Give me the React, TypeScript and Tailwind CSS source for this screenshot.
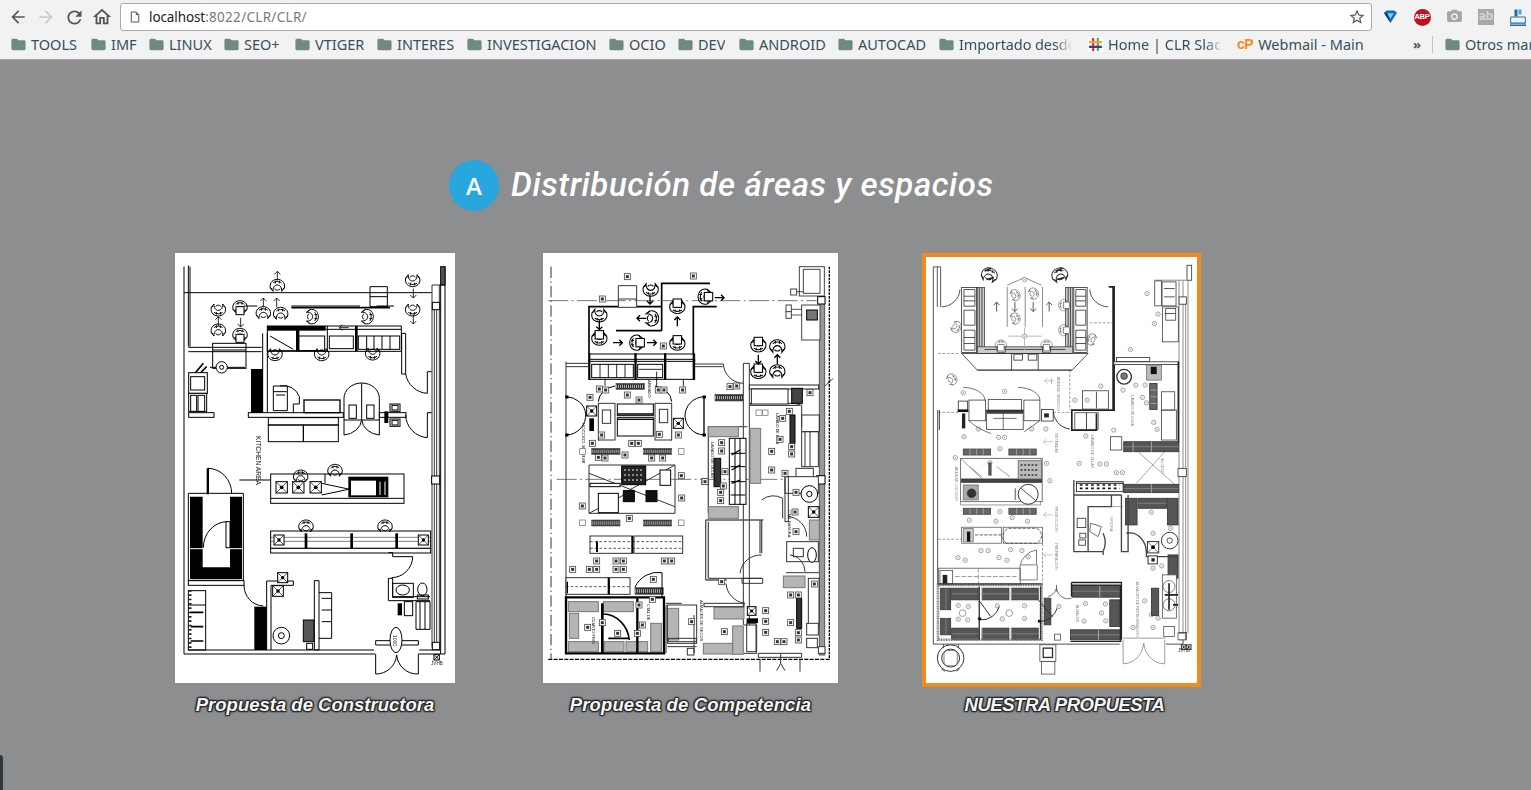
import React from "react";

type N = number[];
const Rs = ({ d, fill = "none", stroke, sw }: { d: N[]; fill?: string; stroke?: string; sw?: number }) => (
  <g fill={fill} stroke={stroke} strokeWidth={sw}>
    {d.map((r, i) => (
      <rect key={i} x={r[0]} y={r[1]} width={r[2]} height={r[3]} />
    ))}
  </g>
);
const Chair = ({ x, y, r = 0, s = 1, seat = false }: { x: number; y: number; r?: number; s?: number; seat?: boolean }) => (
  <g transform={`translate(${x} ${y}) rotate(${r}) scale(${s})`} fill="none">
    <path d="M-21 6C-25 -12 -11 -20 0 -20S25 -12 21 6L13 16C14 6 9 -3 0 -3S-14 6 -13 16Z" />
    <path d="M-13 -9C-7 -15 7 -15 13 -9M-15 10L-21 6M15 10L21 6M-6 -16V-8M6 -16V-8" />
    {seat ? <rect x="-12" y="-2" width="24" height="24" fill="#fff" /> : <path d="M-8 8C-6 14 6 14 8 8" />}
  </g>
);
const Chairs = ({ d, s = 1 }: { d: N[]; s?: number }) => (
  <>
    {d.map((c, i) => (
      <Chair key={i} x={c[0]} y={c[1]} r={c[2] || 0} s={s} seat={!!c[3]} />
    ))}
  </>
);
const Arrows = ({ d, w = 2.5 }: { d: N[]; w?: number }) => (
  <g fill="none" strokeWidth={w}>
    {d.map((a, i) => (
      <path key={i} transform={`translate(${a[0]} ${a[1]}) rotate(${a[2]})`} d="M0 14V-14M-9 -5L0 -14L9 -5" />
    ))}
  </g>
);
const Xs = ({ d }: { d: N[] }) => (
  <g fill="#fff" strokeWidth="3">
    {d.map((b, i) => (
      <g key={i}>
        <rect x={b[0]} y={b[1]} width={b[2]} height={b[2]} />
        <path d={`M${b[0]} ${b[1]}l${b[2]} ${b[2]}M${b[0] + b[2]} ${b[1]}l${-b[2]} ${b[2]}`} fill="none" strokeWidth="2" />
        <circle cx={b[0] + b[2] / 2} cy={b[1] + b[2] / 2} r={b[2] / 6} fill="#000" stroke="none" />
      </g>
    ))}
  </g>
);
const Tags = ({ d }: { d: N[] }) => (
  <g>
    {d.map((t, i) => (
      <g key={i}>
        <rect x={t[0] - 9} y={t[1] - 9} width="18" height="18" fill="#fff" stroke="#444" strokeWidth="2.4" />
        <rect x={t[0] - 4.5} y={t[1] - 4.5} width="9" height="9" fill="#333" stroke="none" />
      </g>
    ))}
  </g>
);
const Rings = ({ d }: { d: N[] }) => (
  <g fill="#fff" stroke="#777" strokeWidth="2">
    {d.map((t, i) => (
      <g key={i}>
        <circle cx={t[0]} cy={t[1]} r="6.5" />
        <circle cx={t[0]} cy={t[1]} r="2" fill="#999" stroke="none" />
      </g>
    ))}
  </g>
);
const Label = ({ x, y, t, fs = 13, r = 90, c = "#555" }: { x: number; y: number; t: string; fs?: number; r?: number; c?: string }) => (
  <text
    transform={`translate(${x} ${y}) rotate(${r})`}
    fontSize={fs}
    fill={c}
    stroke="none"
    fontFamily="'Liberation Sans', sans-serif"
  >
    {t}
  </text>
);

const PlanOne = () => (
  <svg viewBox="15 9 840 1290" className="block w-full h-full blur-[0.25px]" fill="none" stroke="#000" strokeWidth="3">
    <path d="M42 50V1212H615M745 1212H825V50M60 50V290M55 46V290M42 128H785M55 1200H612M748 1200H810M812 105V1212" />
    <rect x="812" y="50" width="13" height="55" fill="#555" />
    <path d="M786 105V1192M808 105V1192M793 180V1178M800 180V1178M786 105H825" strokeWidth="2.4" />
    <Rs d={[[787, 157, 22, 22], [785, 678, 24, 24], [787, 1177, 22, 22]]} fill="#fff" />
    <path d="M364 173H660" strokeWidth="5" />
    <path d="M600 110H652V170H600ZM600 140H652M620 168H672M364 168H570" />
    <rect x="292" y="228" width="402" height="76" fill="#fff" />
    <Rs d={[[292, 228, 175, 14], [378, 228, 10, 76], [555, 228, 8, 76]]} fill="#000" stroke="none" />
    <path d="M292 238H694M472 228V300M694 250H707V372H695V250M300 258L370 298M296 302H466" />
    <Rs d={[[386, 258, 78, 44], [478, 258, 72, 38], [565, 258, 124, 40]]} />
    <path d="M590 258V298M612 258V298M636 258V298M660 258V298" />
    <Chairs d={[[322, 108], [728, 90, 180], [728, 178, 180], [145, 178, 180], [145, 242], [210, 172, 0, 1], [210, 255, 0, 1], [280, 190], [332, 192], [425, 200, 90], [590, 200, 90], [315, 312, 180], [455, 312, 180], [608, 310, 180], [392, 680], [495, 663], [408, 830], [645, 830]]} />
    <Arrows d={[[322, 78, 0], [730, 130, 180], [730, 208, 180], [145, 214, 0], [212, 217, 180], [280, 158, 0], [320, 158, 0], [522, 233, 270]]} />
    <path d="M222 168H262" />
    <path d="M55 292H275M55 305H275M278 250V488M292 250V488" />
    <rect x="128" y="280" width="100" height="75" />
    <path d="M128 300H228M120 352H225" />
    <circle cx="155" cy="352" r="17" fill="#fff" />
    <circle cx="155" cy="352" r="6" />
    <path d="M75 370L100 340M85 375L110 350" strokeWidth="5" />
    <Rs d={[[56, 368, 56, 62], [56, 430, 54, 55], [62, 380, 42, 40], [62, 436, 18, 48], [84, 436, 20, 48], [56, 488, 76, 14], [235, 488, 285, 14]]} fill="#fff" />
    <rect x="243" y="357" width="36" height="132" fill="#000" stroke="none" />
    <path d="M310 408H352V482H310ZM310 425H350M318 435H345M330 408A50 50 0 0 1 388 440V462H370V490" />
    <rect x="402" y="450" width="108" height="38" fill="#fff" strokeWidth="4" />
    <path d="M522 445A53 46 0 0 1 628 445M575 400V510M522 445V510H628V445M522 555A60 50 0 0 0 575 510M628 555A60 50 0 0 1 575 510M522 510V555M628 510V555" />
    <Rs d={[[537, 465, 22, 40], [590, 465, 22, 40]]} fill="#fff" />
    <Rs d={[[660, 462, 30, 22], [660, 507, 30, 22], [666, 466, 18, 14], [666, 511, 18, 14], [628, 488, 80, 14]]} fill="#fff" />
    <rect x="643" y="484" width="12" height="35" fill="#000" stroke="none" />
    <path d="M707 372A70 70 0 0 0 772 430M772 365H785M772 365V430M707 495A70 70 0 0 0 772 563M772 488H785M772 488V563" />
    <Rs d={[[295, 503, 210, 22], [295, 525, 105, 50], [400, 525, 105, 50]]} />
    <Label x={257} y={558} t="KITCHEN  AREA" fs={20} c="#222" />
    <path d="M208 690H302M113 655A72 75 0 0 1 185 730" />
    <rect x="110" y="655" width="7" height="78" fill="#000" stroke="none" />
    <rect x="302" y="672" width="400" height="88" />
    <path d="M302 745H702M455 700L620 735M455 735L620 700M465 672V700" />
    <Xs d={[[318, 695, 34], [368, 695, 34], [420, 695, 34]]} />
    <rect x="535" y="680" width="120" height="62" fill="#000" stroke="none" />
    <rect x="543" y="692" width="75" height="44" fill="#fff" stroke="none" />
    <path d="M630 695V735M645 695V735M664 685L695 740" stroke="#fff" />
    <path d="M55 730H220V992H55Z" />
    <path fill="#000" stroke="none" fillRule="evenodd" d="M60 740H216V988H60ZM98 740V952H180V740Z" />
    <path d="M100 893A72 78 0 0 1 172 815M60 896H100M180 896H216" stroke="#fff" />
    <path d="M100 893A72 78 0 0 1 172 815" />
    <rect x="168" y="815" width="12" height="78" fill="#fff" />
    <rect x="55" y="992" width="167" height="14" fill="#fff" />
    <path d="M222 1006A60 62 0 0 0 280 1068" />
    <rect x="253" y="1070" width="37" height="130" fill="#000" stroke="none" />
    <rect x="55" y="1022" width="52" height="178" />
    <path d="M55 1065H107" />
    <path d="M60 1020V1198" strokeWidth="9" stroke="#222" strokeDasharray="5 8" />
    <path d="M62 1087H100M62 1130H100M62 1173H100" strokeWidth="5" />
    <rect x="302" y="843" width="480" height="52" />
    <rect x="302" y="895" width="480" height="14" fill="#fff" />
    <Rs d={[[404, 850, 8, 45], [541, 850, 8, 45], [676, 850, 8, 45]]} fill="#000" stroke="none" />
    <path d="M302 862H782M302 874H782" strokeWidth="1.5" />
    <Xs d={[[312, 855, 30], [745, 855, 30]]} />
    <path d="M655 908H668V920H728M728 920A64 64 0 0 1 665 983" />
    <path d="M655 985H668V1040H780M655 985V1052H780" />
    <rect x="668" y="1000" width="62" height="42" />
    <ellipse cx="698" cy="1020" rx="20" ry="15" />
    <ellipse cx="757" cy="1018" rx="14" ry="19" />
    <rect x="742" y="1035" width="33" height="12" />
    <rect x="703" y="1055" width="25" height="42" />
    <rect x="683" y="1060" width="13" height="36" fill="#000" stroke="none" />
    <path d="M738 1055H780V1138H738ZM750 1055V1138M765 1055V1138" />
    <path d="M290 993H370V1006H303V1200M290 993V1200M433 992H447V1200H433V992" />
    <Xs d={[[308, 1007, 32], [323, 968, 30]]} />
    <circle cx="334" cy="1157" r="25" />
    <circle cx="334" cy="1157" r="9" />
    <path d="M447 1028H485V1165H447M455 1045H485M455 1080H485M455 1115H485" />
    <rect x="400" y="1110" width="32" height="65" fill="#555" />
    <rect x="410" y="1180" width="18" height="18" />
    <path d="M617 1172H745V1185H617ZM617 1212V1272A62 62 0 0 0 680 1215M745 1212V1272A62 62 0 0 1 680 1215" />
    <ellipse cx="678" cy="1170" rx="18" ry="38" fill="#fff" />
    <Label x={670} y={1155} t="1000" fs={15} c="#111" />
    <Xs d={[[792, 1214, 16]]} />
    <Label x={783} y={1245} t="JVHB" fs={14} r={0} c="#222" />
  </svg>
);

const grills = [[228, 400, 85, 18], [525, 433, 85, 20], [155, 595, 85, 18], [310, 595, 85, 18], [155, 810, 85, 18], [310, 810, 85, 18], [285, 1013, 85, 20]];
const grays = [[630, 535, 32, 165], [505, 530, 90, 30], [505, 770, 90, 35], [85, 1055, 90, 30], [190, 1055, 90, 30], [85, 1175, 90, 30], [192, 1175, 60, 30], [258, 1175, 65, 30], [88, 1090, 28, 75], [332, 1120, 32, 85], [382, 1075, 34, 95], [522, 1072, 90, 35], [490, 1180, 88, 32], [578, 1128, 32, 85], [730, 978, 65, 35], [808, 810, 30, 60]];
const PlanTwo = () => (
  <svg viewBox="9 9 885 1290" className="block w-full h-full blur-[0.35px]" fill="none" stroke="#000" strokeWidth="3">
    <path d="M33 50V1226" stroke="#333" strokeDasharray="34 10 4 10" />
    <path d="M25 152H830M50 688H830" stroke="#333" strokeDasharray="60 10 6 10" strokeWidth="2" />
    <path d="M25 1228H870" strokeDasharray="12 4" strokeWidth="4" />
    <path d="M868 50V1228" strokeDasharray="8 3" strokeWidth="4" />
    <rect x="838" y="140" width="16" height="1075" fill="#999" stroke="#555" />
    <path d="M862 400L872 388M855 408L880 385" strokeWidth="2" />
    <Rs d={[[778, 50, 75, 88], [790, 58, 50, 72], [752, 117, 18, 18], [785, 165, 55, 105], [738, 165, 16, 20], [738, 185, 16, 20]]} fill="#fff" stroke="#444" />
    <Rs d={[[800, 180, 32, 30]]} fill="#777" />
    <path d="M770 125H790M755 178H785M755 195H785" strokeWidth="2" />
    <Rs d={[[833, 140, 22, 22], [830, 677, 25, 25]]} fill="#fff" strokeWidth="4" />
    <path d="M147 312V170H235M290 170H365V100H510M228 242H365M460 312V170H530M365 100V242" strokeWidth="5" />
    <path d="M235 107H290V172H235ZM235 147H290" stroke="#333" />
    <Chairs s={1.05} d={[[332, 118, 180], [178, 195, 180], [178, 265, 180, 1], [335, 205, 90], [412, 170, 180, 1], [412, 280, 180, 1], [290, 278, 270, 1], [495, 140, 270, 1], [655, 285, 180, 1], [712, 290], [655, 365, 180, 1], [712, 365]]} />
    <Arrows w={4} d={[[330, 148, 180], [178, 225, 180], [305, 205, 270], [412, 215, 0], [233, 278, 90], [335, 278, 90], [538, 143, 90], [655, 328, 180], [712, 328, 0]]} />
    <Rs d={[[147, 312, 317, 76], [147, 328, 317, 6]]} fill="#fff" />
    <Rs d={[[145, 310, 6, 80], [283, 310, 7, 80], [372, 310, 7, 80], [458, 310, 6, 80]]} fill="#000" stroke="none" />
    <Rs d={[[155, 343, 125, 40], [293, 343, 75, 40]]} />
    <path d="M180 343V383M205 343V383M230 343V383M255 343V383M297 358H365M195 388V408M350 365V410M430 388V410" strokeWidth="2.5" />
    <path d="M78 335V1210M78 340H145M78 350H145M465 342H550M465 350H548M550 342A62 62 0 0 0 610 400M610 340H628V1125M610 340V1125" stroke="#333" />
    <Rs d={[[632, 460, 145, 6], [628, 405, 208, 12], [634, 417, 110, 45]]} fill="#fff" stroke="#222" />
    <Rs d={grills} fill="#333" stroke="#555" sw={2} />
    <g stroke="#aaa" strokeWidth="1.5" strokeDasharray="3 3">
      <path d="M228 409H313M525 443H610M155 604H240M310 604H395M155 819H240M310 819H395M285 1023H370" strokeWidth="10" />
    </g>
    <Rs d={[[750, 495, 15, 85], [522, 625, 20, 85], [770, 1045, 15, 90]]} fill="#333" />
    <Rs d={[[232, 462, 108, 35], [232, 503, 108, 55]]} fill="#fff" strokeWidth="4" />
    <path d="M232 492H340M232 508H340" strokeWidth="4" />
    <path d="M175 455A60 50 0 0 1 225 408M395 455A60 50 0 0 0 345 408M175 570L225 552M395 570L345 552" />
    <Rs d={[[175, 460, 50, 110], [345, 460, 50, 110], [187, 480, 25, 40], [358, 478, 25, 40]]} fill="#fff" stroke="#333" />
    <path d="M80 440A62 58 0 0 1 137 490A60 60 0 0 1 80 555M492 440A60 58 0 0 0 435 500A60 60 0 0 0 492 555" />
    <Rs d={[[77, 438, 7, 6], [77, 552, 7, 6], [489, 438, 7, 6], [489, 552, 7, 6]]} fill="#000" />
    <path d="M492 440V555" strokeWidth="4" />
    <Xs d={[[140, 468, 30], [400, 505, 30]]} />
    <rect x="148" y="505" width="14" height="38" fill="#000" stroke="none" />
    <path d="M147 645V790H405V645H147M147 670L405 770M147 790L280 720M405 645L250 730" stroke="#333" />
    <rect x="245" y="648" width="72" height="56" fill="#222" />
    <path d="M252 660h55M252 675h55M252 690h55" stroke="#aaa" strokeDasharray="6 6" strokeWidth="5" />
    <Rs d={[[175, 730, 60, 58], [360, 660, 32, 46], [150, 700, 90, 10]]} fill="#fff" />
    <Rs d={[[250, 722, 33, 33], [318, 722, 33, 33]]} fill="#111" />
    <path d="M505 530V790M505 530H622M497 810H670M497 810V990M505 815V985M497 990H560M505 985H665M665 810V910M660 810V910" stroke="#555" strokeWidth="4" />
    <Rs d={grays} fill="#b5b5b5" stroke="#777" />
    <Rs d={[[568, 565, 50, 198]]} fill="#fff" strokeWidth="5" />
    <path d="M572 610H616M572 650H616M572 695H616M572 735H616M585 565V763M600 565V763" strokeWidth="3" />
    <path d="M575 615L600 600M575 660L600 645M575 700L600 690" strokeWidth="4" />
    <path d="M600 970A62 62 0 0 1 665 915M606 985H668V1000H606ZM558 1000A65 65 0 0 0 615 1060M665 750A55 55 0 0 1 728 745V805M745 800A60 60 0 0 1 800 860" stroke="#333" />
    <Rs d={[[755, 415, 32, 45]]} fill="#444" />
    <path d="M770 465H785V530M785 495H838V545H785ZM785 545H835V650H785ZM795 545V650M810 545V650" stroke="#333" />
    <Rs d={[[768, 655, 52, 32], [735, 680, 100, 50]]} fill="#fff" stroke="#333" />
    <circle cx="808" cy="732" r="25" fill="#fff" />
    <circle cx="808" cy="732" r="8" />
    <Rs d={[[735, 680, 10, 135]]} stroke="#333" />
    <Xs d={[[805, 770, 32], [622, 1070, 26]]} />
    <Rs d={[[740, 875, 95, 60], [760, 895, 30, 25]]} fill="#fff" stroke="#333" />
    <ellipse cx="816" cy="915" rx="13" ry="22" fill="#fff" />
    <path d="M750 915A50 50 0 0 1 795 965M738 968H838" stroke="#333" />
    <Rs d={[[805, 985, 32, 145], [800, 1120, 35, 35], [800, 1165, 32, 28], [835, 1190, 20, 20]]} fill="#fff" stroke="#333" />
    <Rs d={[[150, 858, 128, 52], [282, 858, 146, 52], [78, 983, 128, 50], [208, 983, 62, 50]]} fill="#fff" stroke="#333" />
    <Rs d={[[168, 874, 6, 32], [203, 983, 6, 50], [274, 858, 6, 52], [80, 995, 4, 35]]} fill="#000" stroke="none" />
    <path d="M150 875H428M150 895H428M78 1010H270" strokeDasharray="8 6" strokeWidth="2" />
    <path d="M78 1042H292V1210H78ZM293 1042H372V1210H78" strokeWidth="7" />
    <path d="M187 1060V1210" strokeWidth="8" />
    <path d="M190 1092A80 88 0 0 1 268 1170M205 1165H268" strokeWidth="5" />
    <path d="M285 1012A75 75 0 0 1 366 968V1040" strokeWidth="3" />
    <Rs d={[[382, 1065, 88, 115], [385, 1165, 84, 10], [492, 1060, 120, 10], [442, 1195, 20, 20]]} stroke="#333" />
    <path d="M378 1060H425M378 1065V1210M462 1095V1210M612 1125H650V1210H612M382 1190H470" stroke="#333" />
    <Rs d={[[620, 1120, 28, 85]]} stroke="#333" />
    <rect x="620" y="1105" width="34" height="14" fill="#000" stroke="none" />
    <path d="M655 1210H785V1222H655ZM660 1228V1265M780 1228V1265M710 1262L722 1240L735 1262M722 1210V1240" stroke="#333" />
    <Label x={323} y={390} t="ARMADO" fs={12} c="#222" />
    <Label x={708} y={490} t="LAVADO DE LOZA" fs={11} c="#222" />
    <Label x={512} y={575} t="LAVADO DE OLLAS" fs={12} c="#222" />
    <Label x={135} y={640} t="AREA DE COCCION" fs={13} c="#222" r={270} />
    <Label x={480} y={1050} t="ALMACEN DE SECOS" fs={12} c="#222" />
    <Label x={155} y={1100} t="CUARTO FRIO" fs={12} c="#222" />
    <Label x={322} y={1062} t="CTAL DE" fs={12} c="#222" />
    <Label x={745} y={780} t="CTAL BASURA" fs={12} c="#222" />
    <Tags d={[[262, 80], [460, 78], [187, 147], [370, 288], [178, 417], [197, 420], [355, 420], [372, 420], [262, 435], [297, 450], [428, 420], [150, 442], [570, 410], [590, 408], [810, 428], [748, 484], [728, 505], [720, 568], [755, 590], [755, 612], [695, 604], [695, 660], [735, 670], [545, 578], [545, 603], [185, 555], [358, 553], [415, 555], [157, 580], [275, 580], [295, 580], [175, 622], [195, 624], [255, 615], [335, 624], [368, 624], [424, 677], [494, 694], [555, 665], [550, 708], [127, 768], [425, 744], [268, 805], [768, 727], [765, 786], [768, 845], [170, 933], [228, 933], [250, 933], [373, 933], [395, 933], [98, 958], [148, 958], [170, 958], [228, 958], [250, 958], [340, 988], [337, 1048], [297, 1065], [307, 1125], [187, 1118], [143, 1132], [233, 1150], [292, 1150], [553, 1145], [677, 1082], [677, 1114], [677, 1147], [823, 1002], [752, 1035], [775, 1035], [752, 1118], [775, 1148], [775, 1170], [542, 727], [542, 752], [495, 695], [545, 995], [455, 1115], [712, 1175], [732, 1175]]} />
    <Rs d={[[119, 596, 17, 17], [415, 596, 17, 17], [119, 810, 17, 17], [415, 810, 17, 17], [648, 480, 18, 16], [668, 480, 16, 16]]} fill="#fff" stroke="#666" sw={2} />
  </svg>
);

const bands = [[612, 575, 165, 30], [612, 703, 165, 25], [617, 745, 35, 80], [655, 745, 85, 30], [743, 745, 32, 80], [745, 915, 30, 70], [457, 1007, 145, 35], [570, 1050, 30, 80], [452, 1140, 150, 30], [695, 1015, 22, 82], [62, 1015, 30, 65], [62, 1105, 30, 50], [95, 1015, 80, 35], [187, 1015, 80, 35], [275, 1015, 80, 35], [95, 1135, 80, 35], [187, 1135, 80, 35], [275, 1135, 80, 35], [373, 1045, 20, 80]];
const PlanThree = () => (
  <svg viewBox="18 22 814 1276" className="block w-full h-full blur-[0.35px]" fill="none" stroke="#333" strokeWidth="2.5">
    <path d="M40 50V1183H600M738 1183H790V1150M52 50V170M62 50V170M40 50H62M53 480V1005" />
    <Rs d={[[802, 45, 14, 45]]} stroke="#333" />
    <path d="M778 92V1150M790 92V1150M805 92V1150M798 140V1150M705 90H805" stroke="#777" />
    <Rs d={[[778, 140, 22, 22], [775, 655, 25, 25], [778, 1148, 22, 22]]} fill="#fff" />
    <path d="M55 310H120M55 487H115M400 487H455M450 360V480M510 218H580M55 868H125M368 868V1005" strokeDasharray="8 5" stroke="#666" strokeWidth="2" />
    <Rs d={[[125, 112, 45, 195], [462, 112, 40, 195]]} fill="#fff" strokeWidth="3" />
    <path d="M132 118H165V168H132ZM132 138H165M132 152H165M132 180H165V225H132ZM132 240H165V300H132ZM132 262H165M132 280H165M468 118H498V168H468ZM468 138H498M468 152H498M468 180H498V225H468ZM468 240H498V300H468ZM468 262H498M468 280H498" />
    <Rs d={[[172, 112, 22, 195], [437, 112, 22, 195], [172, 290, 287, 20]]} fill="#ccc" stroke="#444" />
    <path d="M178 112V290M186 112V290M445 112V290M452 112V290M194 298H437M125 310L172 360H275V310M275 360H355V310M355 360H457L505 310M172 360H457M125 310H505" />
    <Rs d={[[282, 312, 26, 18], [325, 312, 26, 18], [232, 290, 24, 16], [368, 290, 24, 16]]} fill="#fff" strokeWidth="3" />
    <path d="M65 170A58 55 0 0 0 120 118M510 118A58 55 0 0 0 565 170" />
    <path d="M567 110H583V480H456M462 480H456V540M456 480V540H530V490M580 110V480" strokeWidth="5" stroke="#222" />
    <path d="M262 105L314 82L365 105M262 110V230M316 110V230M368 110V230" stroke="#777" />
    <g stroke="#555" strokeWidth="2.2">
      <Chairs s={0.78} d={[[108, 230, 120], [516, 268, 290], [95, 388, 60], [285, 135, 70], [340, 130, 70], [285, 205, 70], [432, 165, 270, 1], [432, 240, 270, 1], [243, 285, 0, 1], [380, 285, 0, 1]]} />
    </g>
    <g stroke="#222" strokeWidth="2.6">
      <Chairs s={1.1} d={[[208, 75, 15], [420, 75, -15]]} />
      <path d="M194 62l20 -8M200 88l22 -6M408 62l20 -8M412 88l22 -6" strokeWidth="5" />
    </g>
    <Arrows d={[[230, 170, 0], [388, 170, 0], [285, 170, 180], [340, 170, 180]]} />
    <g stroke="#aaa">
      <Arrows d={[[388, 392, 270], [385, 575, 270], [385, 795, 270], [385, 915, 270]]} w={2} />
      <path d="M265 258H365M314 232V300" />
      <path d="M395 385V402" />
    </g>
    <Rings d={[[314, 88], [314, 258], [632, 298], [682, 130], [715, 192], [704, 220], [130, 428], [254, 424], [465, 450], [502, 450], [543, 408], [610, 420], [648, 405], [676, 405], [668, 442], [680, 458], [702, 517], [712, 538], [582, 540], [498, 558], [175, 537], [132, 560], [236, 562], [254, 562], [335, 537], [378, 537], [240, 596], [106, 623], [210, 638], [380, 640], [478, 640], [540, 642], [560, 642], [590, 668], [608, 668], [390, 692], [240, 785], [148, 811], [228, 814], [277, 803], [323, 814], [183, 902], [205, 902], [272, 899], [306, 902], [114, 923], [136, 931], [237, 923], [261, 931], [325, 921], [695, 787], [700, 850], [753, 835], [700, 955], [726, 948], [675, 1053], [497, 1061], [557, 1062], [545, 1089], [493, 1114], [558, 1113], [115, 1067], [145, 1070], [232, 1068], [314, 1068], [115, 1108], [143, 1110], [247, 1107], [314, 1106], [417, 1070], [640, 1133], [700, 1133], [715, 1105], [695, 1095]]} />
    <Rs d={[[582, 335, 195, 8], [590, 322, 100, 12]]} fill="#fff" stroke="#333" />
    <path d="M776 335V578" strokeWidth="5" stroke="#222" />
    <circle cx="613" cy="380" r="22" fill="#fff" strokeWidth="4" />
    <circle cx="613" cy="378" r="10" fill="#777" />
    <Rs d={[[680, 345, 45, 45]]} fill="#bbb" stroke="#777" />
    <rect x="693" y="350" width="18" height="22" fill="#111" stroke="none" />
    <Rs d={[[690, 400, 22, 78]]} fill="#666" />
    <path d="M692 420H712M692 440H712M692 460H712" stroke="#aaa" />
    <Rs d={[[725, 425, 40, 55], [725, 480, 45, 90], [728, 170, 48, 105], [738, 175, 30, 35]]} stroke="#444" />
    <Rs d={[[705, 92, 20, 75], [727, 95, 42, 72]]} stroke="#444" />
    <path d="M733 115H765M733 140H765M735 190H768" />
    <path d="M655 605L775 712M735 605L650 700" stroke="#999" />
    <Rs d={[[488, 422, 78, 55], [465, 488, 35, 50], [500, 488, 35, 50]]} stroke="#444" />
    <path d="M530 425V475" />
    <Rs d={[[572, 560, 34, 40]]} stroke="#444" />
    <Rs d={bands} fill="#555" stroke="#333" />
    <g stroke="#aaa" strokeWidth="1.5">
      <path d="M612 590H777M612 716H777M655 760H740M457 1024H602M452 1155H602M78 1015V1080M78 1105V1155M95 1032H355M95 1152H355" />
      <path d="M640 575V605M695 575V605M695 703V728M540 1007V1042M536 1140V1170M186 1015V1050M274 1015V1050M186 1135V1170M274 1135V1170" strokeWidth="3" />
    </g>
    <Rs d={[[147, 450, 50, 62], [205, 448, 100, 35], [200, 490, 110, 48], [312, 450, 48, 62]]} fill="#fff" stroke="#444" />
    <rect x="200" y="480" width="110" height="7" fill="#333" />
    <path d="M130 412C165 412 195 430 195 450M147 512C165 530 195 545 213 550M295 412C330 412 360 430 360 450M360 512L313 545M220 505H290M250 490V540" stroke="#555" />
    <path d="M58 480V540M400 480A60 55 0 0 0 450 537" strokeWidth="3" />
    <Rs d={[[115, 453, 28, 30], [365, 478, 35, 35]]} fill="#fff" strokeWidth="3" />
    <rect x="113" y="478" width="32" height="8" fill="#111" stroke="none" />
    <rect x="126" y="490" width="10" height="45" fill="#222" stroke="none" />
    <rect x="373" y="490" width="14" height="12" fill="#222" stroke="none" />
    <Rs d={[[130, 597, 82, 18], [267, 597, 82, 18], [130, 775, 82, 18], [267, 775, 82, 18]]} fill="#666" stroke="#444" />
    <path d="M150 597V615M170 597V615M190 597V615M290 597V615M310 597V615M330 597V615M150 775V793M170 775V793M190 775V793M290 775V793M310 775V793M330 775V793" stroke="#aaa" />
    <rect x="122" y="625" width="245" height="130" stroke="#555" />
    <rect x="122" y="755" width="240" height="10" stroke="#888" />
    <path d="M150 650L185 680M230 650L270 680M122 625L190 690M367 625L300 690" stroke="#888" />
    <rect x="125" y="687" width="240" height="10" fill="#444" />
    <rect x="295" y="632" width="70" height="55" fill="#bbb" stroke="#666" />
    <path d="M302 645h55M302 660h55M302 675h55" stroke="#333" strokeDasharray="6 5" strokeWidth="5" />
    <rect x="130" y="705" width="45" height="45" fill="#aaa" stroke="#777" />
    <circle cx="155" cy="730" r="13" fill="#333" />
    <circle cx="325" cy="733" r="30" fill="#fff" strokeWidth="3" />
    <path d="M303 715L348 752M286 715V750" />
    <rect x="205" y="637" width="10" height="40" fill="#555" stroke="none" />
    <Rs d={[[125, 832, 120, 48], [250, 832, 118, 48]]} fill="#fff" stroke="#666" />
    <path d="M165 855H245M260 880C240 870 250 840 265 835H350C370 845 370 870 350 880Z" stroke="#444" strokeDasharray="10 4" />
    <Rs d={[[130, 836, 30, 40]]} fill="#ccc" stroke="#777" />
    <rect x="141" y="845" width="10" height="30" fill="#111" stroke="none" />
    <Rs d={[[56, 955, 245, 50], [60, 962, 38, 40]]} fill="#fff" stroke="#555" />
    <path d="M105 980H295M175 955V1005" stroke="#888" strokeDasharray="14 5" />
    <rect x="68" y="975" width="14" height="28" fill="#222" stroke="none" />
    <path d="M300 945H350V900A60 60 0 0 0 300 950V990H352V945" stroke="#666" />
    <path d="M54 1005H365V1170H54Z" strokeWidth="8" stroke="#777" strokeDasharray="3 2" />
    <path d="M178 1010V1170M362 1010V1170M54 1002H365" strokeWidth="4" stroke="#333" />
    <rect x="62" y="1082" width="30" height="22" fill="#fff" stroke="none" />
    <path d="M180 1055L212 1100M180 1110A55 55 0 0 0 238 1070M355 1050L398 1100M360 1115A55 55 0 0 0 412 1075" strokeWidth="3" />
    <rect x="174" y="1103" width="10" height="8" fill="#111" stroke="none" />
    <rect x="354" y="1110" width="10" height="8" fill="#111" stroke="none" />
    <circle cx="128" cy="1090" r="10" stroke="#888" />
    <circle cx="268" cy="1090" r="10" stroke="#888" />
    <path d="M410 1005V1025M385 1040A35 38 0 0 0 410 1015A35 38 0 0 0 455 1045" stroke="#555" />
    <path d="M455 998H605V1170M455 998V1040M456 1006H602M452 1175H605M602 1006V1175" strokeWidth="4" stroke="#222" />
    <Rs d={[[404, 1153, 18, 18], [728, 975, 42, 130], [732, 1130, 32, 30], [775, 1150, 22, 20]]} fill="#fff" stroke="#555" />
    <circle cx="748" cy="1010" r="18" stroke="#666" />
    <circle cx="748" cy="1065" r="18" stroke="#666" />
    <path d="M735 1035H775M760 1065H775M748 1000V1080" strokeWidth="5" stroke="#222" />
    <path d="M462 690V905H550V915M462 735H605M470 700H612M462 690V730M605 735V905H625V735M680 910V920H775M550 905A55 60 0 0 0 550 850M620 850A50 60 0 0 1 680 910M575 735V770H505V905H460" stroke="#444" strokeWidth="4" />
    <path d="M575 770H610M505 770V900" stroke="#777" strokeWidth="2" />
    <Rs d={[[472, 805, 26, 28], [480, 850, 18, 14], [477, 870, 20, 16]]} stroke="#333" />
    <path d="M512 820L545 830L535 860L510 845Z" stroke="#555" />
    <Rs d={[[470, 695, 140, 30]]} stroke="#222" />
    <path d="M480 705h120M480 715h120" stroke="#111" strokeDasharray="8 9" strokeWidth="5" />
    <Xs d={[[683, 875, 34]]} />
    <circle cx="750" cy="872" r="25" fill="#fff" strokeWidth="3" />
    <circle cx="750" cy="872" r="8" />
    <rect x="685" y="918" width="28" height="24" fill="#fff" strokeWidth="3" />
    <rect x="695" y="925" width="10" height="10" fill="#222" stroke="none" />
    <path d="M610 1170V1242A62 68 0 0 0 672 1180M735 1170V1242A62 68 0 0 1 672 1180M610 1165H738" stroke="#888" />
    <circle cx="92" cy="1225" r="40" strokeWidth="3" />
    <circle cx="92" cy="1225" r="27" strokeWidth="3" />
    <rect x="72" y="1202" width="40" height="46" rx="10" stroke="#666" />
    <path d="M70 1183V1195M115 1183V1195M65 1258L75 1265M118 1258L110 1265" />
    <Rs d={[[360, 1185, 48, 50], [365, 1235, 40, 38]]} stroke="#555" />
    <rect x="370" y="1195" width="28" height="28" strokeWidth="4" />
    <Xs d={[[785, 1185, 14], [800, 1185, 14]]} />
    <Label x={775} y={1206} t="JVHB" fs={14} r={0} c="#333" />
    <Label x={410} y={380} t="AREA DE SERVICIO" fs={11} c="#888" />
    <Label x={635} y={435} t="LAVADO DE LOZA" fs={11} c="#888" />
    <Label x={515} y={555} t="LAVADO DE OLLAS" fs={11} c="#888" />
    <Label x={404} y={550} t="ENTRADAS" fs={11} c="#888" />
    <Label x={404} y={770} t="PRODUCCION" fs={11} c="#888" />
    <Label x={404} y={880} t="PREPARACION" fs={11} c="#888" />
    <Label x={572} y={800} t="OFICINA" fs={11} c="#888" />
    <Label x={470} y={1065} t="ALMACEN" fs={11} c="#888" />
    <Label x={650} y={995} t="ALMACEN DE REFRIGERACION" fs={11} c="#888" />
    <Label x={725} y={625} t="ACCESO" fs={11} c="#888" />
    <Label x={105} y={650} t="AREA DE COCCION" fs={11} c="#888" />
  </svg>
);

const P = ({ d, className = "" }: { d: string; className?: string }) => (
  <svg viewBox="0 0 24 24" className={className} fill="currentColor">
    <path d={d} />
  </svg>
);
const folderD = "M10 4H4c-1.1 0-2 .9-2 2v12c0 1.1.9 2 2 2h16c1.1 0 2-.9 2-2V8c0-1.1-.9-2-2-2h-8l-2-2z";
const Folder = () => <P d={folderD} className="w-[17px] h-[17px] shrink-0 text-[#6f8a83]" />;

const Mark = ({ t, w, fade }: { t: string; w: number; fade?: boolean }) => (
  <div className="flex items-center shrink-0 h-full" style={{ width: w }}>
    <Folder />
    <span
      className={
        "ml-[4px] whitespace-nowrap overflow-hidden " +
        (fade ? "w-[113px] tracking-[-0.1px] [mask-image:linear-gradient(to_right,#000_85%,transparent)]" : "")
      }
    >
      {t}
    </span>
  </div>
);

const Cap = ({ t, className = "" }: { t: string; className?: string }) => (
  <div
    className={
      "mt-[11px] h-[22px] text-center whitespace-nowrap font-['Liberation_Sans',sans-serif] font-bold italic text-[18.5px] leading-[22px] text-[#f4f4f4] [text-shadow:0_0_2px_#222,0_0_2px_#222,0_0_3px_#333,1px_1px_1px_#2b2b2b,-1px_-1px_1px_#2b2b2b,1px_-1px_1px_#2b2b2b,-1px_1px_1px_#2b2b2b] " +
      className
    }
  >
    {t}
  </div>
);

export default function App() {
  return (
    <div className="relative w-[1531px] h-[790px] overflow-hidden flex flex-col bg-[#8d8e90]">
      <header className="h-[60px] shrink-0 bg-[#f2f2f2] border-b border-[#a3a3a3] font-['Noto_Sans',sans-serif]">
        <div className="h-[33px] pt-[1px] flex items-center pl-[4px]">
          <div className="w-[28px] shrink-0 flex justify-center text-[#555]">
            <P className="w-[20px] h-[20px]" d="M20 11H7.83l5.59-5.59L12 4l-8 8 8 8 1.41-1.41L7.83 13H20v-2z" />
          </div>
          <div className="w-[28px] shrink-0 flex justify-center text-[#c9c9c9]">
            <P className="w-[20px] h-[20px]" d="M12 4l-1.41 1.41L16.17 11H4v2h12.17l-5.58 5.59L12 20l8-8z" />
          </div>
          <div className="w-[28px] shrink-0 flex justify-center text-[#555]">
            <P className="w-[21px] h-[21px]" d="M17.65 6.35A7.958 7.958 0 0 0 12 4c-4.42 0-7.99 3.58-7.99 8s3.57 8 7.99 8c3.73 0 6.84-2.55 7.73-6h-2.08A5.99 5.99 0 0 1 12 18c-3.31 0-6-2.69-6-6s2.69-6 6-6c1.66 0 3.14.69 4.22 1.78L13 11h7V4l-2.35 2.35z" />
          </div>
          <div className="w-[28px] shrink-0 flex justify-center text-[#555]">
            <P className="w-[22px] h-[22px]" d="M12 5.69l5 4.5V18h-2v-6H9v6H7v-7.81l5-4.5M12 3L2 12h3v8h6v-6h2v6h6v-8h3L12 3z" />
          </div>
          <div className="ml-[4px] w-[1252px] shrink-0 h-[28px] bg-white border border-[#a9a9a9] rounded-[3px] flex items-center pl-[9px] pr-[5px] text-[13.5px]">
            <svg viewBox="0 0 12 14" className="w-[10px] h-[12px] text-[#555]" fill="none" stroke="currentColor" strokeWidth="1.2">
              <path d="M1.5 1H7.5L10.5 4V13H1.5ZM7.5 1V4H10.5" />
            </svg>
            <span className="ml-[9px] text-[#1c1c1c] tracking-[-0.1px]">localhost</span>
            <span className="text-[#7a7a7a] tracking-[0.3px]">:8022/CLR/CLR/</span>
            <div className="ml-auto text-[#555]">
              <P className="w-[18px] h-[18px]" d="M22 9.24l-7.19-.62L12 2 9.19 8.63 2 9.24l5.46 4.73L5.82 21 12 17.27 18.18 21l-1.63-7.03L22 9.24zM12 15.4l-3.76 2.27 1-4.28-3.32-2.88 4.38-.38L12 6.1l1.71 4.04 4.38.38-3.32 2.88 1 4.28L12 15.4z" />
            </div>
          </div>
          <div className="ml-[2px] flex shrink-0">
            <div className="w-[32px] flex justify-center">
              <svg viewBox="0 0 16 16" className="w-[15px] h-[15px]">
                <path d="M1 4L4 1.5H12L15 4L8 15Z" fill="#0b6fb8" />
                <path d="M4.5 4.5H11.5L8 10Z" fill="#7fd0f5" />
                <path d="M1 4L8 15L4.5 4.5Z" fill="#0a3b66" />
              </svg>
            </div>
            <div className="w-[32px] flex justify-center">
              <div className="w-[17px] h-[17px] rounded-full bg-[#c0101b] flex items-center justify-center text-white font-bold text-[7.5px] font-['Liberation_Sans',sans-serif] tracking-[-0.2px]">
                ABP
              </div>
            </div>
            <div className="w-[32px] flex justify-center">
              <svg viewBox="0 0 16 14" className="w-[15px] h-[13px]">
                <path fillRule="evenodd" fill="#a6a6a6" d="M1.5 2.5H4.5L5.5 .7H10.5L11.5 2.5H14.5C15.3 2.5 16 3.2 16 4V12.5C16 13.3 15.3 14 14.5 14H1.5C.7 14 0 13.3 0 12.5V4C0 3.2 .7 2.5 1.5 2.5ZM8 4.6A3.6 3.6 0 1 0 8 11.8A3.6 3.6 0 1 0 8 4.6Z" />
                <circle cx="8" cy="8.2" r="2.1" fill="#a6a6a6" />
              </svg>
            </div>
            <div className="w-[32px] flex justify-center">
              <div className="w-[16px] h-[16px] bg-[#a8a8a8] text-[#d7d7d7] font-bold text-[12px] leading-[15px] text-center font-['Liberation_Sans',sans-serif]">ab</div>
            </div>
            <div className="w-[32px] flex justify-center">
              <svg viewBox="0 0 16 17" className="w-[16px] h-[17px]">
                <rect x="4.5" y="0.5" width="3" height="7" fill="#1f6fae" />
                <rect x="8.5" y="0.5" width="3" height="5" fill="#5aa3d6" />
                <path d="M.7 8H15.3V14H.7ZM0 15H16V16.5H0Z" fill="none" stroke="#1f6fae" />
              </svg>
            </div>
          </div>
        </div>
        <div className="h-[26px] pb-[3px] flex items-center pl-[10px] text-[14.5px] text-[#35505c]">
          <Mark t="TOOLS" w={80} />
          <Mark t="IMF" w={58} />
          <Mark t="LINUX" w={75} />
          <Mark t="SEO+" w={71} />
          <Mark t="VTIGER" w={82} />
          <Mark t="INTERES" w={90} />
          <Mark t="INVESTIGACION" w={142} />
          <Mark t="OCIO" w={69} />
          <Mark t="DEV" w={61} />
          <Mark t="ANDROID" w={99} />
          <Mark t="AUTOCAD" w={101} />
          <Mark t="Importado desde" w={150} fade />
          <div className="w-[149px] shrink-0 flex items-center">
            <svg viewBox="0 0 16 16" className="w-[15px] h-[15px] shrink-0 bg-white">
              <path d="M5.5 1V15" stroke="#e0266c" strokeWidth="2.4" />
              <path d="M10.5 1V15" stroke="#3db38c" strokeWidth="2.4" />
              <path d="M1 5.5H15" stroke="#e7a820" strokeWidth="2.4" />
              <path d="M1 10.5H15" stroke="#4d3a73" strokeWidth="2.4" />
            </svg>
            <span className="ml-[5px] w-[115px] overflow-hidden whitespace-nowrap [mask-image:linear-gradient(to_right,#000_85%,transparent)]">Home | CLR Slack</span>
          </div>
          <div className="w-[176px] shrink-0 flex items-center">
            <span className="text-[#f58a1f] font-bold text-[14px] font-['Liberation_Sans',sans-serif] tracking-[-0.5px]">cP</span>
            <span className="ml-[5px] whitespace-nowrap">Webmail - Main</span>
          </div>
          <span className="w-[19px] shrink-0 text-[#555] text-[13px] font-bold">»</span>
          <div className="w-[12px] shrink-0 flex">
            <div className="w-px h-[17px] bg-[#c4c4c4]" />
          </div>
          <Mark t="Otros marcadores" w={120} />
        </div>
      </header>
      <main className="flex-1 min-h-0">
        <div className="pt-[100px] pl-[449px] flex items-center h-[151px]">
          <div className="w-[50px] h-[51px] rounded-full bg-[#29a6de] text-white font-['Open_Sans',sans-serif] font-semibold text-[24px] flex items-center justify-center">
            A
          </div>
          <h1 className="ml-[12px] -mt-[2px] font-['Roboto',sans-serif] font-medium italic text-white text-[33px] leading-[51px] whitespace-nowrap tracking-[0.61px]">
            Distribución de áreas y espacios
          </h1>
        </div>
        <div className="pt-[42px] pl-[175px] flex items-start">
          <figure className="w-[280px] shrink-0">
            <div className="w-[280px] h-[430px] bg-white">
              <PlanOne />
            </div>
            <Cap t="Propuesta de Constructora" />
          </figure>
          <figure className="w-[295px] ml-[88px] shrink-0">
            <div className="w-[295px] h-[430px] bg-white">
              <PlanTwo />
            </div>
            <Cap t="Propuesta de Competencia" className="tracking-[0.12px]" />
          </figure>
          <figure className="w-[279px] ml-[84px] shrink-0">
            <div className="w-[279px] h-[434px] bg-white border-4 border-[#f28a1e]">
              <PlanThree />
            </div>
            <div className="-mt-[4px]">
              <Cap t="NUESTRA PROPUESTA" className="pl-[6px] tracking-[-0.45px]" />
            </div>
          </figure>
        </div>
      </main>
      <div className="absolute left-0 bottom-0 w-[3px] h-[35px] bg-[#2e3a3a] rounded-tr-[3px]" />
    </div>
  );
}
